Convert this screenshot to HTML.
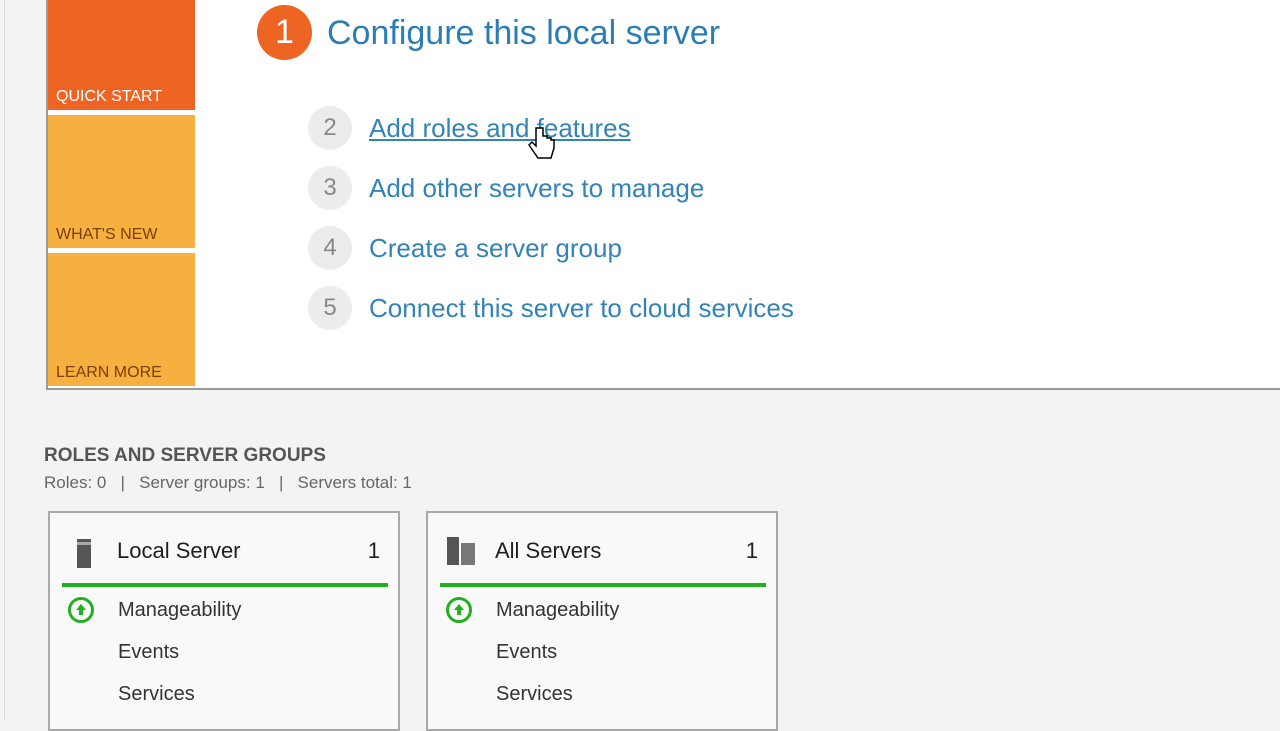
<!DOCTYPE html><html><head><style>
body{margin:0;width:1280px;height:720px;background:#f3f3f3;font-family:"Liberation Sans",sans-serif;position:relative;overflow:hidden}
.a{position:absolute}
.vl{left:4px;top:0;width:1px;height:720px;background:#d8d8d8}
.panel{left:46px;top:-2px;width:1240px;height:392px;background:#fff;border:2px solid #9a9a9a;border-top:none;box-sizing:border-box}
.tile{position:absolute;left:48px;width:147px;color:#7a3e06;font-size:16px}
.tile span{position:absolute;left:8px;bottom:4px}
.num{position:absolute;width:44px;height:44px;border-radius:50%;background:#ececec;color:#888;font-size:24px;text-align:center;line-height:44px}
.lk{position:absolute;left:369px;font-size:26px;color:#3483b7}
.card{position:absolute;top:511px;width:352px;height:220px;background:#f9f9f9;border:2px solid #a9a9a9;box-sizing:border-box}
.card .t{position:absolute;left:67px;top:25px;font-size:22px;color:#1e1e1e}
.card .n{position:absolute;right:18px;top:25px;font-size:22px;color:#1e1e1e}
.card .g{position:absolute;left:12px;top:70px;width:326px;height:4px;background:#20b020}
.card .i{position:absolute;left:68px;font-size:20px;color:#333}
.ok{position:absolute;left:18px;top:84px;width:20px;height:20px;border:3px solid #22b022;border-radius:50%}
</style></head><body>
<div class="a vl"></div>
<div class="a panel"></div>
<div class="tile" style="top:0;height:110px;background:#ee6422;color:#fff"><span>QUICK START</span></div>
<div class="tile" style="top:115px;height:133px;background:#f6b03f"><span>WHAT'S NEW</span></div>
<div class="tile" style="top:253px;height:133px;background:#f6b03f"><span>LEARN MORE</span></div>
<div class="a" style="left:257px;top:5px;width:55px;height:55px;border-radius:50%;background:#ee6422;color:#fff;font-size:34px;text-align:center;line-height:55px">1</div>
<div class="a" style="left:327px;top:14px;font-size:34px;color:#2c7db3">Configure this local server</div>
<div class="num" style="left:308px;top:106px">2</div><div class="lk" style="top:113px;text-decoration:underline">Add roles and features</div>
<div class="num" style="left:308px;top:166px">3</div><div class="lk" style="top:173px">Add other servers to manage</div>
<div class="num" style="left:308px;top:226px">4</div><div class="lk" style="top:233px">Create a server group</div>
<div class="num" style="left:308px;top:286px">5</div><div class="lk" style="top:293px">Connect this server to cloud services</div>
<svg class="a" style="left:528px;top:126px" width="28" height="36" viewBox="0 0 28 36"><path d="M8 2v18l-4-4-3 3 9 13h13l3-10v-8h-3v-2h-4v-2h-4V2z" fill="#fff" stroke="#000" stroke-width="1.5"/></svg>
<div class="a" style="left:44px;top:445px;font-size:19px;font-weight:bold;color:#555">ROLES AND SERVER GROUPS</div>
<div class="a" style="left:44px;top:473px;font-size:17px;color:#666">Roles: 0 &nbsp; | &nbsp; Server groups: 1 &nbsp; | &nbsp; Servers total: 1</div>
<div class="card" style="left:48px">
<div class="a" style="left:27px;top:26px;width:14px;height:26px;background:#555;border-top:3px solid #555;box-shadow:inset 0 3px 0 #aaa"></div>
<div class="t">Local Server</div><div class="n">1</div><div class="g"></div>
<div class="ok"><svg width="20" height="20"><path d="M10 4l-5 6h3v5h4v-5h3z" fill="#22b022"/></svg></div>
<div class="i" style="top:86px">Manageability</div><div class="i" style="top:128px">Events</div><div class="i" style="top:170px">Services</div></div>
<div class="card" style="left:426px">
<div class="a" style="left:19px;top:24px;width:12px;height:28px;background:#555"></div><div class="a" style="left:33px;top:30px;width:14px;height:22px;background:#777"></div>
<div class="t">All Servers</div><div class="n">1</div><div class="g"></div>
<div class="ok"><svg width="20" height="20"><path d="M10 4l-5 6h3v5h4v-5h3z" fill="#22b022"/></svg></div>
<div class="i" style="top:86px">Manageability</div><div class="i" style="top:128px">Events</div><div class="i" style="top:170px">Services</div></div>
</body></html>
